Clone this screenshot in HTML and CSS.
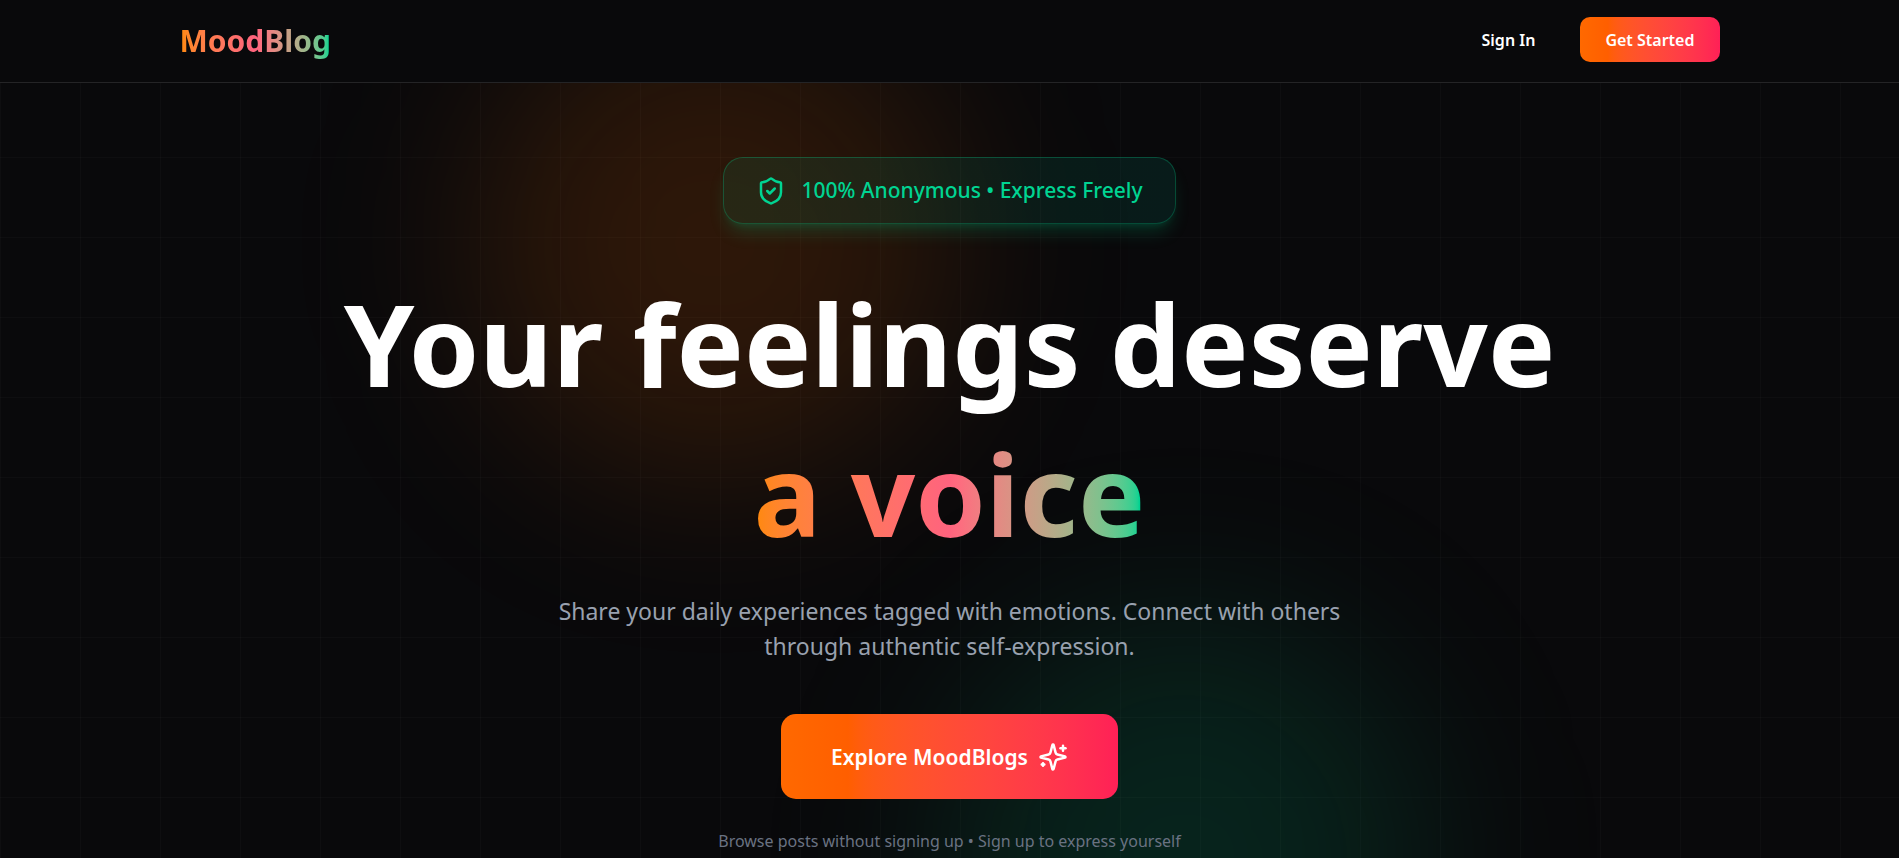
FILE: index.html
```html
<!DOCTYPE html>
<html lang="en">
<head>
<meta charset="utf-8">
<meta name="viewport" content="width=device-width, initial-scale=1">
<title>MoodBlog</title>
<link rel="stylesheet" href="styles.css">
</head>
<body>
<header class="site-header">
  <div class="header-inner">
    <a class="logo gradient-text" href="#">MoodBlog</a>
    <nav class="nav">
      <a class="nav-link" href="#">Sign In</a>
      <button class="button button-small" type="button">Get Started</button>
    </nav>
  </div>
</header>
<main class="hero">
  <div class="glow glow-orange"></div>
  <div class="glow glow-green"></div>
  <div class="hero-content">
    <div class="badge">
      <svg class="icon" viewBox="0 0 24 24" aria-hidden="true"><path d="M20 13c0 5-3.5 7.5-7.66 8.95a1 1 0 0 1-.67-.01C7.5 20.5 4 18 4 13V6a1 1 0 0 1 1-1c2 0 4.5-1.2 6.24-2.72a1.17 1.17 0 0 1 1.52 0C14.51 3.81 17 5 19 5a1 1 0 0 1 1 1z"/><path d="m9 12 2 2 4-4"/></svg>
      <span>100% Anonymous • Express Freely</span>
    </div>
    <h1 class="title">Your feelings deserve<br><span class="gradient-text">a voice</span></h1>
    <p class="subtitle">Share your daily experiences tagged with emotions. Connect with others through authentic self-expression.</p>
    <button class="button button-large" type="button">
      <span>Explore MoodBlogs</span>
      <svg class="icon" viewBox="0 0 24 24" aria-hidden="true"><path d="M9.937 15.5A2 2 0 0 0 8.5 14.063l-6.135-1.582a.5.5 0 0 1 0-.962L8.5 9.936A2 2 0 0 0 9.937 8.5l1.582-6.135a.5.5 0 0 1 .963 0L14.063 8.5A2 2 0 0 0 15.5 9.937l6.135 1.581a.5.5 0 0 1 0 .964L15.5 14.063a2 2 0 0 0-1.437 1.437l-1.582 6.135a.5.5 0 0 1-.963 0z"/><path d="M20 3v4"/><path d="M22 5h-4"/><path d="M4 17v2"/><path d="M5 18H3"/></svg>
    </button>
    <p class="note">Browse posts without signing up • Sign up to express yourself</p>
  </div>
</main>
</body>
</html>
```

FILE: styles.css
```css
* { box-sizing: border-box; }

body {
  margin: 0;
  min-height: 100vh;
  display: flex;
  flex-direction: column;
  background: #09090b;
  color: #fff;
  font-family: "Segoe UI", "Noto Sans", "Open Sans", sans-serif;
}

.site-header {
  padding: 17px 24px 18px;
  border-bottom: 1px solid #242426;
}

.header-inner {
  max-width: 1540px;
  margin: 0 auto;
  display: flex;
  align-items: flex-start;
  justify-content: space-between;
}

.logo {
  font-size: 30px;
  line-height: 47px;
  font-weight: 700;
  text-decoration: none;
}

.gradient-text {
  background: linear-gradient(to right in oklab, oklch(75% 0.183 55.934), oklch(71.2% 0.194 13.428), oklch(76.5% 0.177 163.223));
  background-clip: text;
  -webkit-background-clip: text;
  color: transparent;
}

.nav {
  display: flex;
  align-items: center;
  gap: 45px;
}

.nav-link {
  color: #fff;
  font-size: 16px;
  font-weight: 600;
  text-decoration: none;
}

.button {
  display: inline-flex;
  align-items: center;
  justify-content: center;
  border: 0;
  color: #fff;
  font-family: inherit;
  font-weight: 600;
  background: linear-gradient(to right in oklab, oklch(70.5% 0.213 47.604), oklch(64.5% 0.246 16.439));
}

.button-small {
  height: 45px;
  padding: 0 25px;
  border-radius: 10px;
  font-size: 16px;
}

.button-large {
  height: 85px;
  margin-top: 50px;
  padding: 0 50px;
  gap: 10px;
  border-radius: 15px;
  font-size: 21px;
}

.icon {
  width: 30px;
  height: 30px;
  flex: none;
  fill: none;
  stroke: currentColor;
  stroke-width: 2;
  stroke-linecap: round;
  stroke-linejoin: round;
}

.hero {
  position: relative;
  flex: 1;
  overflow: hidden;
  padding: 74px 24px 0;
  background-image:
    linear-gradient(to right, rgba(255, 255, 255, 0.02) 1px, transparent 1px),
    linear-gradient(to bottom, rgba(255, 255, 255, 0.02) 1px, transparent 1px);
  background-size: 80px 80px;
  background-position: 0 -6px;
}

.glow {
  position: absolute;
  width: 480px;
  height: 480px;
  border-radius: 50%;
  filter: blur(90px);
}

.glow-orange {
  left: 25%;
  top: -80px;
  background: rgba(255, 105, 0, 0.15);
}

.glow-green {
  right: 25%;
  bottom: -240px;
  background: rgba(0, 188, 125, 0.15);
}

.hero-content {
  position: relative;
  display: flex;
  flex-direction: column;
  align-items: center;
  text-align: center;
}

.badge {
  display: flex;
  align-items: center;
  gap: 15px;
  padding: 15px 32px;
  border: 1px solid rgba(0, 188, 125, 0.3);
  border-radius: 20px;
  background: linear-gradient(to right, rgba(0, 188, 125, 0.1), rgba(0, 187, 167, 0.1));
  box-shadow: 0 12px 18px -4px rgba(0, 188, 125, 0.2), 0 5px 8px -5px rgba(0, 188, 125, 0.2);
  color: #00d492;
  font-size: 21px;
  line-height: 35px;
  font-weight: 500;
}

.title {
  margin: 44px 0 0;
  font-size: 113px;
  line-height: 150px;
  font-weight: 700;
}

.subtitle {
  max-width: 840px;
  margin: 26px 0 0;
  color: #99a1af;
  font-size: 23px;
  line-height: 35px;
}

.note {
  margin: 30px 0 0;
  color: #6a7282;
  font-size: 16px;
  line-height: 25px;
}
```
